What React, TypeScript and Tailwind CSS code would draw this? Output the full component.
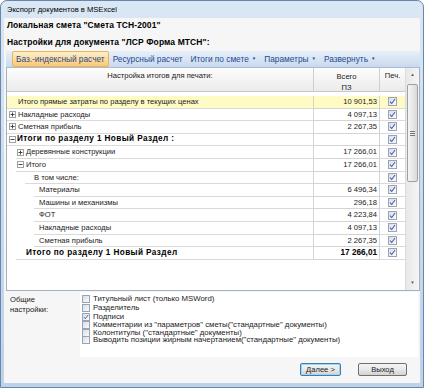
import React from "react";

type Row = {
  text: string;
  x: number;
  lineX: number;
  toggle?: "+" | "-";
  toggleX?: number;
  bold?: boolean;
  value: string;
  yellow?: boolean;
};

const rows: Row[] = [
  { text: "Итого прямые затраты по разделу в текущих ценах", x: 11, lineX: 0, value: "10 901,53", yellow: true },
  { text: "Накладные расходы", x: 11, lineX: 0, toggle: "+", toggleX: 2, value: "4 097,13" },
  { text: "Сметная прибыль", x: 11, lineX: 0, toggle: "+", toggleX: 2, value: "2 267,35" },
  { text: "Итоги по разделу 1 Новый Раздел :", x: 10, lineX: 0, toggle: "-", toggleX: 2, bold: true, value: "" },
  { text: "Деревянные конструкции", x: 19, lineX: 9, toggle: "+", toggleX: 10, value: "17 266,01" },
  { text: "Итого", x: 19, lineX: 9, toggle: "-", toggleX: 10, value: "17 266,01" },
  { text: "В том числе:", x: 27, lineX: 18, value: "" },
  { text: "Материалы", x: 32, lineX: 27, value: "6 496,34" },
  { text: "Машины и механизмы", x: 32, lineX: 27, value: "296,18" },
  { text: "ФОТ", x: 32, lineX: 27, value: "4 223,84" },
  { text: "Накладные расходы", x: 32, lineX: 27, value: "4 097,13" },
  { text: "Сметная прибыль", x: 32, lineX: 27, value: "2 267,35" },
  { text: "Итого по разделу 1 Новый Раздел", x: 19, lineX: 9, bold: true, value: "17 266,01" },
];

const options = [
  { label: "Титульный лист (только MSWord)", checked: false, h: "h-[9.5px]" },
  { label: "Разделитель", checked: false, h: "h-[9px]" },
  { label: "Подписи", checked: true, h: "h-[8.5px]" },
  { label: "Комментарии из \"параметров\" сметы(\"стандартные\" документы)", checked: false, h: "h-[7.8px]" },
  { label: "Колонтитулы (\"стандартные\" документы)", checked: false, h: "h-[7.6px]" },
  { label: "Выводить позиции жирным начертанием(\"стандартные\" документы)", checked: false, h: "h-[7.8px]" },
];

function Check({ checked, size = 9 }: { checked: boolean; size?: number }) {
  return (
    <span
      className="flex shrink-0 items-center justify-center border border-[#9aa3b8] bg-gradient-to-br from-[#d9dee6] to-[#fbfbfb]"
      style={{ width: size, height: size }}
    >
      {checked && (
        <svg viewBox="0 0 8 8" width={size - 2} height={size - 2}>
          <path d="M1.2 4.2 L3.1 6.3 L6.9 1.2" fill="none" stroke="#4059a8" strokeWidth="1.2" />
        </svg>
      )}
    </span>
  );
}

function Toggle({ sign }: { sign: "+" | "-" }) {
  return (
    <span className="flex h-[7px] w-[7px] items-center justify-center border border-[#a0a0a0] bg-white">
      <svg viewBox="0 0 5 5" width="5" height="5">
        <path d="M0.5 2.5 H4.5" stroke="#444" strokeWidth="1" />
        {sign === "+" && <path d="M2.5 0.5 V4.5" stroke="#444" strokeWidth="1" />}
      </svg>
    </span>
  );
}

function ToolItem({ label, arrow, active }: { label: string; arrow?: boolean; active?: boolean }) {
  return (
    <div
      className={
        active
          ? "flex h-[16px] items-center gap-[3px] rounded-[2px] border border-[#e3b461] bg-gradient-to-b from-[#fff0c8] to-[#fbc770] px-[3px] text-[#1d4a93]"
          : "flex h-[16px] items-center gap-[3px] border border-transparent px-[3px] text-[#1d4a93]"
      }
    >
      <span>{label}</span>
      {arrow && <span className="text-[4.5px]">▼</span>}
    </div>
  );
}

function ScrollBar() {
  return (
    <div className="flex w-[14px] flex-col border-l border-[#dcdcdc] bg-gradient-to-r from-[#e8e8e8] to-[#f5f5f5]">
      <div className="flex h-[14px] items-center justify-center text-[4.5px] text-[#555]">▲</div>
      <div className="mx-[1px] mt-[2px] flex h-[98px] items-center justify-center rounded-[2px] border border-[#a0a0a0] bg-gradient-to-r from-[#f6f6f6] to-[#dadada]">
        <div className="flex flex-col gap-[1px]">
          <span className="h-px w-[5px] bg-[#777]" />
          <span className="h-px w-[5px] bg-[#777]" />
          <span className="h-px w-[5px] bg-[#777]" />
        </div>
      </div>
      <div className="flex-1" />
      <div className="flex h-[14px] items-center justify-center text-[4.5px] text-[#555]">▼</div>
    </div>
  );
}

function VistaButton({ label, focused }: { label: string; focused?: boolean }) {
  return (
    <div
      className={
        "flex h-[13px] items-center justify-center rounded-[2px] border bg-gradient-to-b from-[#f4f4f4] via-[#e9e9e9] to-[#d2d2d2] " +
        (focused ? "w-[41px] border-[#3c7fb1] shadow-[inset_0_0_0_1px_#9fd4f5]" : "w-[49px] border-[#707070]")
      }
    >
      {label}
    </div>
  );
}

export default function App() {
  return (
    <div className="h-[388px] w-[424px] bg-white font-['Liberation_Sans',Arial,sans-serif] text-[7.6px] leading-none text-[#1a1a1a]">
      <div className="flex h-full w-full flex-col rounded-t-[7px] border border-[#6a86a8] bg-gradient-to-b from-[#dae7f4] via-[#c9dbee] to-[#bed2e8]">
        <div className="flex h-[17px] items-center pl-[6px] text-[7.6px] text-black">Экспорт документов в MSExcel</div>

        <div className="mx-[3px] flex flex-1 flex-col bg-[#f6f6f6]">
          <div className="flex h-[33px] flex-col pl-[3px] text-[8.5px] font-bold tracking-[0.1px] text-black">
            <div className="flex h-[14px] items-center">Локальная смета "Смета ТСН-2001"</div>
            <div className="mt-[3px] flex h-[14px] items-center">Настройки для документа "ЛСР Форма МТСН":</div>
          </div>

          <div className="ml-[2px] flex h-[17px] items-center border-b border-[#a9bcd6] bg-gradient-to-b from-[#e8f0f9] to-[#c9d9ee] pl-[6px] text-[8.3px]">
            <ToolItem label="Баз.-индексный расчет" active />
            <ToolItem label="Ресурсный расчет" />
            <ToolItem label="Итоги по смете" arrow />
            <ToolItem label="Параметры" arrow />
            <ToolItem label="Развернуть" arrow />
          </div>

          <div className="ml-[2px] flex h-[223px] border border-t-0 border-[#a3b1c4] bg-white">
            <div className="flex flex-1 flex-col">
              <div className="flex h-[24px] border-b border-[#c9c9c9] bg-gradient-to-b from-[#fdfdfd] to-[#ebebeb]">
                <div className="flex flex-1 justify-center border-r border-[#cfcfcf] pt-[4px]">Настройка итогов для печати:</div>
                <div className="flex w-[66px] flex-col items-center border-r border-[#cfcfcf] pt-[3px] leading-[11px]">
                  <span>Всего</span>
                  <span>ПЗ</span>
                </div>
                <div className="flex w-[25px] justify-center pt-[4px]">Печ.</div>
              </div>
              <div className="h-[4px]" />
              {rows.map((r, i) => (
                <div key={i} className={"flex h-[12.6px] " + (r.yellow ? "bg-[#fefcc4]" : "")}>
                  <div className="flex flex-1 border-r border-[#d4d4d4]">
                    <div className="shrink-0" style={{ width: r.lineX }} />
                    <div className="relative flex flex-1 items-center border-b border-[#dadada]">
                      {r.toggle && (
                        <span className="absolute" style={{ left: (r.toggleX ?? 0) - r.lineX }}>
                          <Toggle sign={r.toggle} />
                        </span>
                      )}
                      <span
                        className={r.bold ? "text-[8.2px] font-bold tracking-[0.4px] text-black" : ""}
                        style={{ marginLeft: r.x - r.lineX }}
                      >
                        {r.text}
                      </span>
                    </div>
                  </div>
                  <div
                    className={
                      "flex w-[66px] items-center justify-end border-r border-b border-[#d4d4d4] pr-[2px] " +
                      (r.bold ? "text-[8.2px] font-bold text-black" : "")
                    }
                  >
                    {r.value}
                  </div>
                  <div className="flex w-[25px] items-center justify-center border-b border-[#dadada]">
                    <Check checked />
                  </div>
                </div>
              ))}
            </div>
            <ScrollBar />
          </div>

          <div className="flex flex-1 flex-col">
            <div className="mt-[1px] flex h-[65px]">
              <div className="w-[76px] pl-[6px] pt-[3px] leading-[10px]">
                <div>Общие</div>
                <div>настройки:</div>
              </div>
              <div className="mr-[2px] flex flex-1 flex-col bg-white pl-[2px] pt-[2px] text-[7.8px]">
                {options.map((o, i) => (
                  <div key={i} className={"flex items-center gap-[3px] " + o.h}>
                    <Check checked={o.checked} size={8} />
                    <span className="whitespace-nowrap">{o.label}</span>
                  </div>
                ))}
              </div>
            </div>
            <div className="flex flex-1 items-start justify-end gap-[17px] pr-[13px] pt-[6px]">
              <VistaButton label="Далее >" focused />
              <VistaButton label="Выход" />
            </div>
          </div>
        </div>
        <div className="h-[4px]" />
      </div>
    </div>
  );
}
